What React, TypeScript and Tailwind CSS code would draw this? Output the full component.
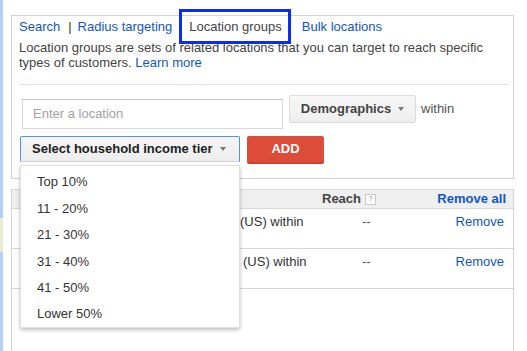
const tiers = ['Top 10%', '11 - 20%', '21 - 30%', '31 - 40%', '41 - 50%', 'Lower 50%'];

const rows = [
  { pad: 'pl-[228px]', label: '(US) within' },
  { pad: 'pl-[231px]', label: '(US) within' },
];

function Caret() {
  return <span className="ml-[7px] inline-block h-0 w-0 border-x-[3.5px] border-t-[4px] border-x-transparent border-t-[#777] align-middle" />;
}

export default function App() {
  return (
    <div className="flex h-[351px] w-[527px] overflow-hidden bg-white font-['Liberation_Sans',Arial,sans-serif] text-[13px] text-[#444]">
      {/* map strip on the far left */}
      <div className="flex w-[3px] flex-col">
        <div className="h-[218px] bg-[#b4cff3]" />
        <div className="h-[34px] bg-[#e9ecd3]" />
        <div className="flex-1 bg-[#b4cff3]" />
      </div>

      <div className="ml-[8px] flex w-[503px] flex-col">
        {/* targeting panel */}
        <div className="mt-[15px] h-[164px] border border-[#d3d3d3] pl-[7px] pr-[4px] pt-px">
          <div className="flex h-[20px] items-center leading-[20px]">
            <span className="text-[#1155cc]">Search</span>
            <span className="ml-[8px] text-[#333]">|</span>
            <span className="ml-[6px] text-[#1155cc]">Radius targeting</span>
            <span className="relative ml-[17px] text-[#444]">
              Location groups
              <span className="absolute left-[-10px] top-[-8px] h-[35px] w-[112px] border-[3px] border-[#0b2cf2]" />
            </span>
            <span className="ml-[20px] text-[#1155cc]">Bulk locations</span>
          </div>
          <p className="mt-[3px] leading-[15px] text-[#444]">
            Location groups are sets of related locations that you can target to reach specific
            <br />
            types of customers. <span className="text-[#1155cc]">Learn more</span>
          </p>
          <div className="mt-[14px] h-px bg-[#e2e2e2]" />

          <div className="mt-[10px] flex items-start">
            <div className="ml-[3px] mt-[4px] flex h-[30px] w-[261px] items-center border border-[#d9d9d9] border-t-[#c6c6c6] pl-[10px] text-[#a3a3a3]">
              Enter a location
            </div>
            <div className="ml-[6px] flex h-[28px] w-[127px] items-center justify-center rounded-[2px] border border-[#dcdcdc] bg-gradient-to-b from-[#f6f6f6] to-[#efefef] font-bold text-[#444]">
              Demographics
              <Caret />
            </div>
            <span className="ml-[5px] mt-[4px] text-[#555]">within</span>
          </div>

          <div className="mt-[7px] flex items-start">
            <div className="relative ml-px">
              <div className="flex h-[26px] w-[220px] items-center rounded-t-[2px] border border-[#4d90fe] border-b-[#d0d0d0] bg-gradient-to-b from-[#f6f6f6] to-[#ededed] pl-[11px] font-bold text-[#222]">
                Select household income tier
                <Caret />
              </div>
              <div className="absolute left-0 top-[29px] z-10 w-[220px] border border-[#e0e0e0] bg-white pt-[3px] shadow-[0_2px_4px_rgba(0,0,0,0.25)]">
                {tiers.map((t) => (
                  <div key={t} className="flex h-[26.4px] items-center pl-[16px] text-[#333]">
                    {t}
                  </div>
                ))}
              </div>
            </div>
            <div className="ml-[7px] flex h-[28px] w-[77px] items-center justify-center rounded-[2px] border-b-2 border-b-[#d23f2c] bg-[#dd4b39] font-bold text-white">
              ADD
            </div>
          </div>
        </div>

        {/* selected locations table */}
        <div className="mt-[10px] flex flex-1 flex-col border-x border-[#d3d3d3]">
          <div className="flex h-[20px] items-center border-y border-[#dadada] bg-[#efefef]">
            <div className="w-[310px]" />
            <span className="font-bold text-[#444]">Reach</span>
            <span className="ml-[4px] flex h-[11px] w-[11px] items-center justify-center border border-[#c8c8c8] bg-white text-[8px] leading-none text-[#999]">?</span>
            <span className="ml-auto mr-[7px] font-bold text-[#1155cc]">Remove all</span>
          </div>
          {rows.map((r, i) => (
            <div key={i} className="flex h-[40px] items-start border-b border-[#d6d6d6] pt-[5px] leading-[15px]">
              <div className={`w-[339px] ${r.pad} text-[#333]`}>{r.label}</div>
              <div className="w-[90px] pl-[11px] text-[#555]">--</div>
              <div className="ml-auto mr-[9px] text-[#1155cc]">Remove</div>
            </div>
          ))}
        </div>
      </div>
    </div>
  );
}
